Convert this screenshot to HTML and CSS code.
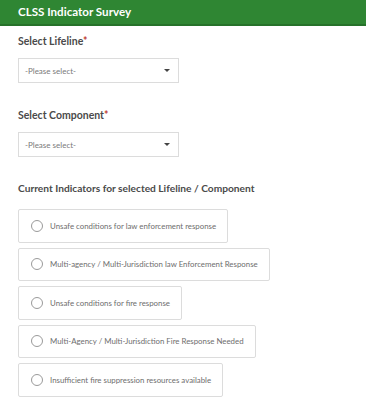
FILE: index.html
```html
<!DOCTYPE html>
<html lang="en">
<head>
  <meta charset="UTF-8">
  <meta name="viewport" content="width=device-width, initial-scale=1.0">
  <title>CLSS Indicator Survey</title>
  <link rel="stylesheet" href="styles.css">
</head>
<body>
  <div class="header">
    <h1 class="title">CLSS Indicator Survey</h1>
  </div>

  <div class="form">
    <label class="label label-first">Select Lifeline<span class="req">*</span></label>
    <div class="select">
      <span>-Please select-</span>
      <span class="caret"></span>
    </div>

    <label class="label">Select Component<span class="req">*</span></label>
    <div class="select">
      <span>-Please select-</span>
      <span class="caret"></span>
    </div>

    <h2 class="heading">Current Indicators for selected Lifeline / Component</h2>

    <div class="options">
      <div class="option"><span class="radio"></span>Unsafe conditions for law enforcement response</div>
      <div class="option"><span class="radio"></span>Multi-agency / Multi-Jurisdiction law Enforcement Response</div>
      <div class="option"><span class="radio"></span>Unsafe conditions for fire response</div>
      <div class="option"><span class="radio"></span>Multi-Agency / Multi-Jurisdiction Fire Response Needed</div>
      <div class="option"><span class="radio"></span>Insufficient fire suppression resources available</div>
    </div>
  </div>
</body>
</html>
```
FILE: styles.css
```css
*{
  margin: 0;
  padding: 0;
  box-sizing: border-box;
}
body{
  font-family: Lato, "Noto Sans", Arial, sans-serif;
  background-color: white;
  color: #4a4a4a;
}
.header{
  height: 26px;
  background-color: #2f8633;
  border-bottom: 2px solid #26722a;
  padding-left: 18px;
  display: flex;
  align-items: center;
}
.title{
  color: white;
  font-size: 11.6px;
  font-weight: 700;
  line-height: 14px;
}
.form{
  padding: 0 18px;
  display: flex;
  flex-direction: column;
  align-items: flex-start;
}
.label{
  display: block;
  font-size: 10.5px;
  font-weight: 700;
  line-height: 14px;
  margin-top: 25px;
}
.label-first{
  margin-top: 8px;
}
.req{
  color: #c0392b;
}
.select{
  margin-top: 10px;
  width: 161px;
  height: 25px;
  border: 1px solid #dcdcdc;
  display: flex;
  align-items: center;
  justify-content: space-between;
  padding: 0 8px 0 6px;
  font-size: 8px;
  color: #7a7a7a;
}
.caret{
  width: 0;
  height: 0;
  border-left: 3px solid transparent;
  border-right: 3px solid transparent;
  border-top: 3px solid #444;
}
.heading{
  margin-top: 24px;
  font-size: 10.2px;
  font-weight: 700;
  line-height: 14px;
}
.options{
  margin-top: 14px;
  display: flex;
  flex-direction: column;
  align-items: flex-start;
  gap: 5px;
}
.option{
  height: 33.5px;
  border: 1px solid #dcdcdc;
  border-radius: 2px;
  display: flex;
  align-items: center;
  padding: 0 11px 0 12px;
  font-size: 7.85px;
  color: #6e6e6e;
}
.radio{
  width: 12px;
  height: 12px;
  border: 1px solid #9a9a9a;
  border-radius: 50%;
  margin-right: 7px;
  flex-shrink: 0;
}
```
